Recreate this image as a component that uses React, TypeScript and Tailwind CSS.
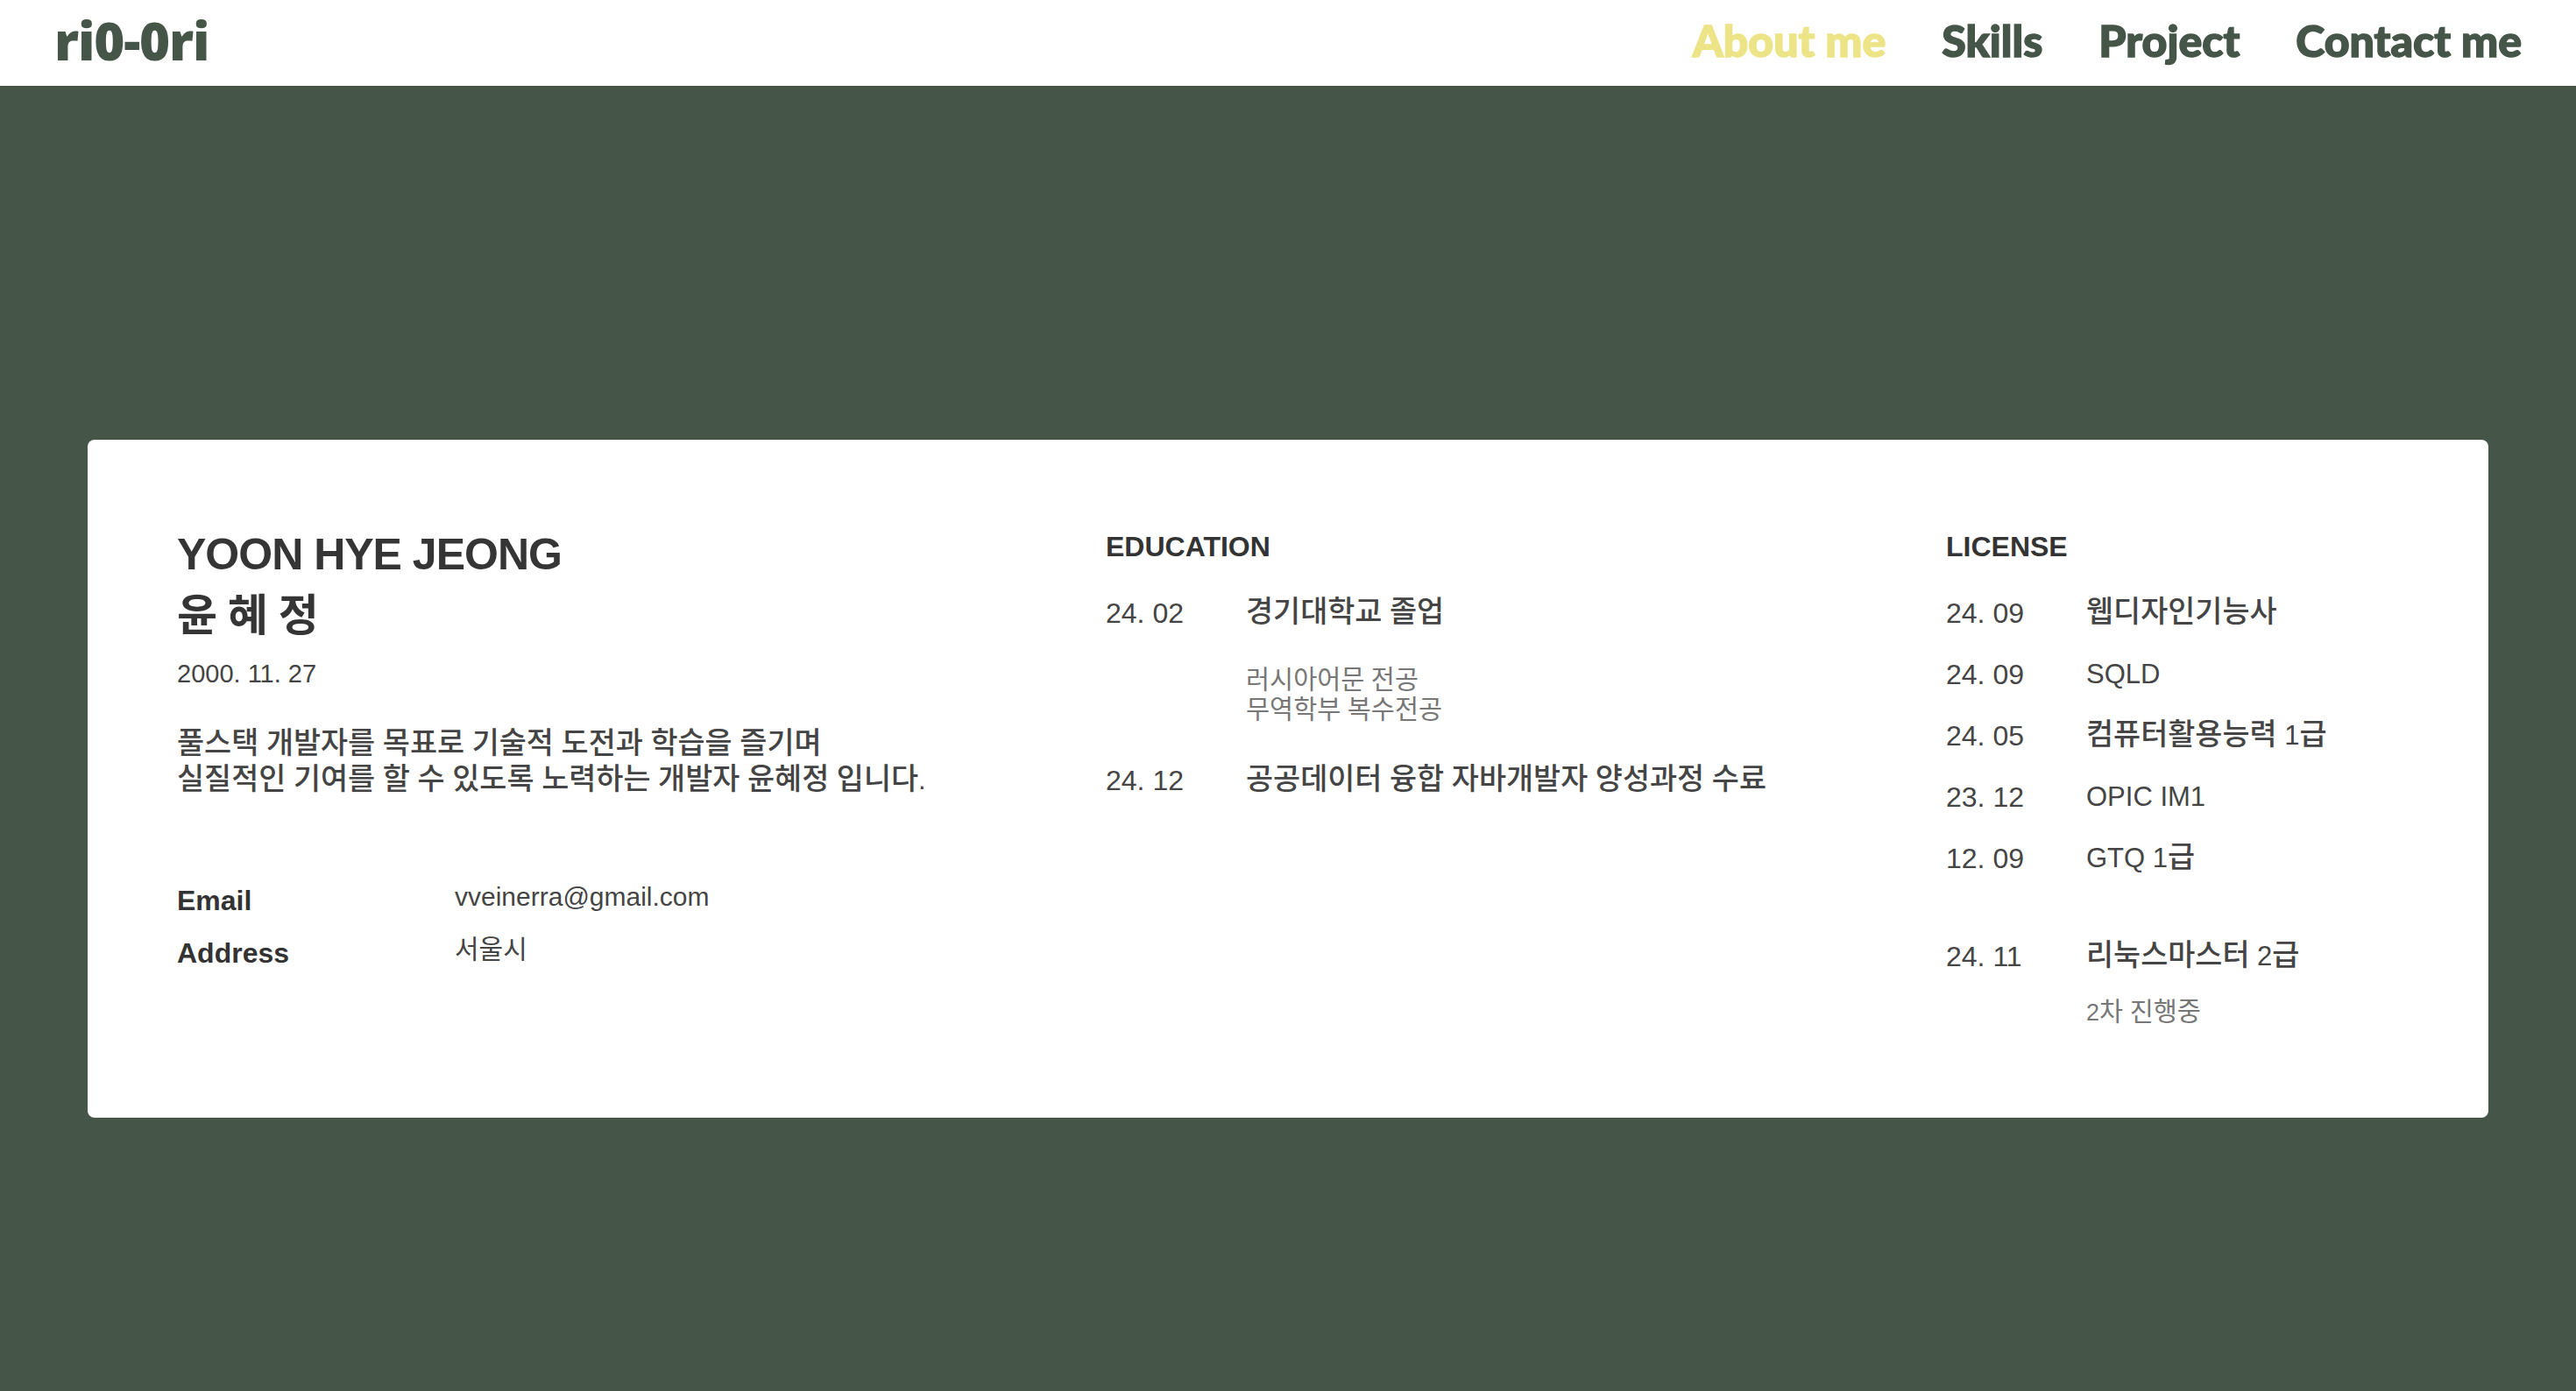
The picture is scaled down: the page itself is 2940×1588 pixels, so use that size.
import React from "react";

const sans = { fontFamily: '"Liberation Sans", "Noto Sans CJK KR", sans-serif' };

function K({ t }: { t: string }) {
  const parts = t.split(/([\uAC00-\uD7A3\u3131-\u318E]+)/);
  return (
    <>
      {parts.map((p, i) =>
        /[\uAC00-\uD7A3\u3131-\u318E]/.test(p) ? (
          <span key={i} className="text-[1.09em] leading-none">
            {p}
          </span>
        ) : (
          <React.Fragment key={i}>{p}</React.Fragment>
        )
      )}
    </>
  );
}

function Row({ date, title, children, className = "" }: { date: string; title: string; children?: React.ReactNode; className?: string }) {
  return (
    <div className={"flex " + className}>
      <div className="w-[160px] shrink-0 text-[32px] leading-[40px] font-medium text-[#454545]">{date}</div>
      <div className="flex flex-col">
        <div className="text-[31px] leading-[40px] font-medium text-[#454545] whitespace-nowrap">
          <K t={title} />
        </div>
        {children}
      </div>
    </div>
  );
}

export default function App() {
  return (
    <div className="min-h-screen flex flex-col bg-[#455649]" style={sans}>
      <header className="h-[98px] bg-white flex items-center justify-between px-[62px] pb-[6px]">
        <div className="text-[60px] font-extrabold text-[#455649] tracking-[-1.2px]" style={{ fontFamily: '"Open Sans", sans-serif' }}>
          ri0-0ri
        </div>
        <nav className="flex items-center gap-[64px] text-[50px] font-black [-webkit-text-stroke:1.5px_currentColor]" style={{ fontFamily: 'Lato, sans-serif' }}>
          <a className="text-[#ede487]">About me</a>
          <a className="text-[#455649]">Skills</a>
          <a className="text-[#455649]">Project</a>
          <a className="text-[#455649]">Contact me</a>
        </nav>
      </header>
      <main className="flex-1 px-[100px] pt-[404px]">
        <section className="h-[774px] bg-white rounded-[8px] flex pl-[102px] pt-[96px] text-[#353535]">
          <div className="w-[1060px] shrink-0 flex flex-col">
            <h1 className="text-[50px] leading-[70px] font-bold tracking-[-1px] text-[#353535]">
              YOON HYE JEONG
              <br />윤 혜 정
            </h1>
            <div className="mt-[11px] text-[29px] leading-[40px] text-[#444]">2000. 11. 27</div>
            <p className="mt-[40px] text-[31px] leading-[41px] font-medium text-[#444] whitespace-nowrap">
              <K t="풀스택 개발자를 목표로 기술적 도전과 학습을 즐기며" />
              <br />
              <K t="실질적인 기여를 할 수 있도록 노력하는 개발자 윤혜정 입니다." />
            </p>
            <div className="mt-[97px] flex flex-col gap-[20px]">
              <div className="flex items-start">
                <div className="w-[317px] text-[32px] leading-[40px] font-bold text-[#333]">Email</div>
                <div className="text-[30px] leading-[32px] text-[#444]">vveinerra@gmail.com</div>
              </div>
              <div className="flex items-start">
                <div className="w-[317px] text-[32px] leading-[40px] font-bold text-[#333]">Address</div>
                <div className="text-[30px] leading-[32px] text-[#444]">서울시</div>
              </div>
            </div>
          </div>
          <div className="w-[959px] shrink-0 flex flex-col pt-[6px]">
            <h2 className="text-[32px] leading-[40px] font-bold text-[#333]">EDUCATION</h2>
            <Row date="24. 02" title="경기대학교 졸업" className="mt-[36px]">
              <div className="mt-[40px] text-[27px] leading-[34px] text-[#777]">
                <K t="러시아어문 전공" />
                <br />
                <K t="무역학부 복수전공" />
              </div>
            </Row>
            <Row date="24. 12" title="공공데이터 융합 자바개발자 양성과정 수료" className="mt-[43px]" />
          </div>
          <div className="flex-1 flex flex-col pt-[6px]">
            <h2 className="text-[32px] leading-[40px] font-bold text-[#333]">LICENSE</h2>
            <div className="mt-[36px] flex flex-col gap-[30px]">
              <Row date="24. 09" title="웹디자인기능사" />
              <Row date="24. 09" title="SQLD" />
              <Row date="24. 05" title="컴퓨터활용능력 1급" />
              <Row date="23. 12" title="OPIC IM1" />
              <Row date="12. 09" title="GTQ 1급" />
              <Row date="24. 11" title="리눅스마스터 2급" className="mt-[42px]">
                <div className="mt-[27px] text-[27px] leading-[34px] text-[#777]">
                  <K t="2차 진행중" />
                </div>
              </Row>
            </div>
          </div>
        </section>
      </main>
    </div>
  );
}
